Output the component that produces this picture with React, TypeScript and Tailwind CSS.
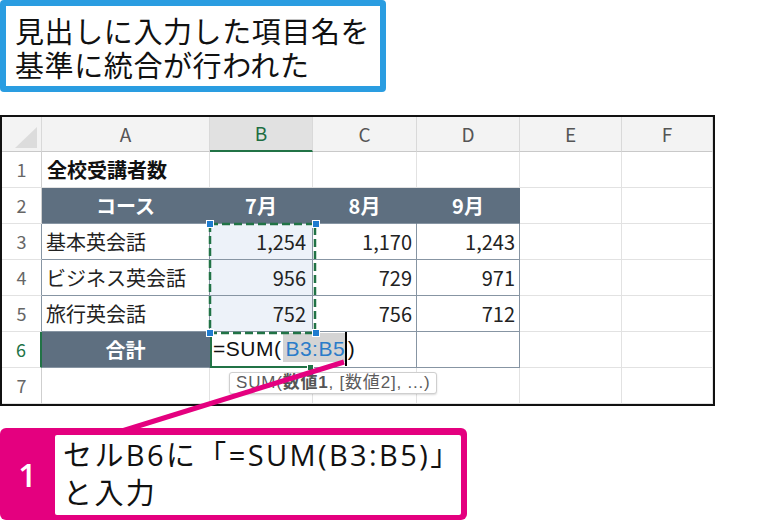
import type { ReactNode } from 'react';

type Cell = { text?: ReactNode; cls: string };

const JP = { fontFamily: '"Noto Sans CJK JP", sans-serif' };

const plain = 'border-r border-b border-[#e2e2e2]';
const tbl = 'border-r border-b border-[#8795a3]';
const slate = 'bg-[#5e6f80] border-r border-b border-r-[#5e6f80] border-b-[#8795a3] text-white font-bold justify-center';
const num = 'border-r border-b border-[#8795a3] justify-end pr-[4px]';
const sel = 'bg-[#edf2f9] border-r border-b border-[#8795a3] justify-end pr-[6px]';
const rowHead = 'bg-white border-r border-b border-r-[#cfcfcf] border-b-[#e2e2e2] text-[#666] justify-center text-[18px]';
const rowHeadTbl = 'bg-white border-r border-b border-r-[#8795a3] border-b-[#e2e2e2] text-[#666] justify-center text-[18px]';
const colHead = 'bg-[#f3f3f3] border-r border-b border-r-[#d9d9d9] border-b-[#c9c9c9] text-[#555] justify-center text-[19px]';

function Corner() {
  return (
    <svg width="40" height="35" className="block">
      <polygon points="13,31 35,31 35,10" fill="#dcdcdc" />
    </svg>
  );
}

function Formula() {
  return (
    <div
      className="flex h-full items-center whitespace-nowrap text-[21px] tracking-[0.5px] text-[#111]"
      style={{ fontFamily: '"Liberation Sans", sans-serif' }}
    >
      <span>=SUM(</span>
      <span className="-mt-[4px] ml-[2px] flex h-[29px] items-center bg-[#d4d4d4] pl-[2px] pt-[3px] text-[#2b7cc9]">B3:B5</span>
      <span className="h-full w-[1.5px] bg-black" />
      <span className="ml-[1px]">)</span>
    </div>
  );
}

const rows: Cell[][] = [
  [
    { cls: 'bg-[#f3f3f3] border-r border-b border-r-[#d9d9d9] border-b-[#c9c9c9]', text: <Corner /> },
    { cls: colHead, text: 'A' },
    { cls: 'bg-[#e1e1e1] border-r border-b-2 border-r-[#d9d9d9] border-b-[#217346] text-[#1e6e42] justify-center text-[19px]', text: 'B' },
    { cls: colHead, text: 'C' },
    { cls: colHead, text: 'D' },
    { cls: colHead, text: 'E' },
    { cls: colHead, text: 'F' },
  ],
  [
    { cls: rowHead, text: '1' },
    { cls: plain + ' font-bold pl-[5px] text-[#111]', text: '全校受講者数' },
    { cls: plain }, { cls: plain }, { cls: plain }, { cls: plain }, { cls: plain },
  ],
  [
    { cls: rowHead, text: '2' },
    { cls: slate, text: 'コース' },
    { cls: slate, text: '7月' },
    { cls: slate, text: '8月' },
    { cls: slate, text: '9月' },
    { cls: plain }, { cls: plain },
  ],
  [
    { cls: rowHeadTbl, text: '3' },
    { cls: tbl + ' pl-[4px]', text: '基本英会話' },
    { cls: sel, text: '1,254' },
    { cls: num, text: '1,170' },
    { cls: num, text: '1,243' },
    { cls: plain }, { cls: plain },
  ],
  [
    { cls: rowHeadTbl, text: '4' },
    { cls: tbl + ' pl-[4px]', text: 'ビジネス英会話' },
    { cls: sel, text: '956' },
    { cls: num, text: '729' },
    { cls: num, text: '971' },
    { cls: plain }, { cls: plain },
  ],
  [
    { cls: rowHeadTbl, text: '5' },
    { cls: tbl + ' pl-[4px]', text: '旅行英会話' },
    { cls: sel, text: '752' },
    { cls: num, text: '756' },
    { cls: num, text: '712' },
    { cls: plain }, { cls: plain },
  ],
  [
    { cls: 'bg-white border-r-2 border-b border-r-[#217346] border-b-[#e2e2e2] text-[#217346] justify-center text-[18px]', text: '6' },
    { cls: slate, text: '合計' },
    {
      cls: 'relative z-10 border-l-2 border-b-2 border-[#217346] pl-[1px]',
      text: (
        <>
          <Formula />
          <span className="absolute -bottom-[5px] right-[-1px] h-[7px] w-[7px] border border-white bg-[#217346]" />
        </>
      ),
    },
    { cls: tbl }, { cls: tbl },
    { cls: plain }, { cls: plain },
  ],
  [
    { cls: rowHead, text: '7' },
    { cls: plain }, { cls: plain }, { cls: plain }, { cls: plain }, { cls: plain }, { cls: plain },
  ],
];

function Sheet() {
  return (
    <div className="mt-[23px] w-[715px] border-2 border-[#111] bg-white">
      <div className="relative">
        <div
          className="grid grid-cols-[40px_168px_103px_104px_103px_102px_91px] grid-rows-[35px_repeat(7,36px)] text-[20px] text-[#222]"
          style={JP}
        >
          {rows.map((row, r) =>
            row.map((c, i) => (
              <div key={`${r}-${i}`} className={`flex items-center whitespace-nowrap ${c.cls}`}>
                {c.text}
              </div>
            ))
          )}
        </div>

        {/* referenced range B3:B5 with its handles */}
        <svg className="pointer-events-none absolute left-[203px] top-[102px] z-20" width="117" height="120">
          <rect x="5" y="5" width="105" height="109" fill="none" stroke="#217346" strokeWidth="2.5" strokeDasharray="8 4" />
          <rect x="1.5" y="1.5" width="7" height="7" fill="#1f7ccf" stroke="#fff" />
          <rect x="107.5" y="1.5" width="7" height="7" fill="#1f7ccf" stroke="#fff" />
          <rect x="1.5" y="110.5" width="7" height="7" fill="#1f7ccf" stroke="#fff" />
          <rect x="107.5" y="110.5" width="7" height="7" fill="#1f7ccf" stroke="#fff" />
        </svg>

        {/* function tooltip */}
        <div
          className="absolute left-[227px] top-[255px] z-20 flex h-[22px] items-center whitespace-nowrap rounded-[3px] border border-[#cfcfcf] bg-white pl-[6px] pr-[5px] text-[17px] tracking-[0.8px] text-[#5c5c5c] shadow-[0_1px_2px_rgba(0,0,0,0.15)]"
          style={{ fontFamily: '"Liberation Sans", "Noto Sans CJK JP", sans-serif' }}
        >
          SUM(<b className="font-bold text-[#555]">数値1</b>, [数値2], ...)
        </div>
      </div>
    </div>
  );
}

export default function App() {
  return (
    <div className="relative h-[521px] w-[783px] overflow-hidden bg-white">
      <div
        className="h-[92px] w-[386px] rounded-[4px] border-[6px] border-[#2a9de1] bg-white pl-[9px] pt-[7px] text-[29px] leading-[34px] tracking-[0.6px] text-[#111]"
        style={JP}
      >
        <div>見出しに入力した項目名を</div>
        <div>基準に統合が行われた</div>
      </div>

      <Sheet />

      <div className="mt-[22px] flex h-[92px] w-[467px] rounded-[6px] bg-[#e4007f] pb-[5px] pr-[6px] pt-[7px]">
        <div
          className="flex w-[55px] items-center justify-center text-[32px] font-semibold text-white"
          style={{ fontFamily: '"Open Sans", "Noto Sans", sans-serif' }}
        >
          1
        </div>
        <div
          className="flex-1 rounded-[2px] bg-white pl-[8px] pt-[1px] text-[29px] leading-[38px] tracking-[2.4px] text-[#111]"
          style={{ fontFamily: '"Open Sans", "Noto Sans CJK JP", sans-serif' }}
        >
          <div>セルB6に「=SUM(B3:B5)」</div>
          <div>と入力</div>
        </div>
      </div>

      {/* leader line */}
      <svg className="pointer-events-none absolute left-0 top-0 z-30" width="783" height="521">
        <line x1="344" y1="362" x2="122" y2="431" stroke="#e4007f" strokeWidth="5" />
      </svg>
    </div>
  );
}
